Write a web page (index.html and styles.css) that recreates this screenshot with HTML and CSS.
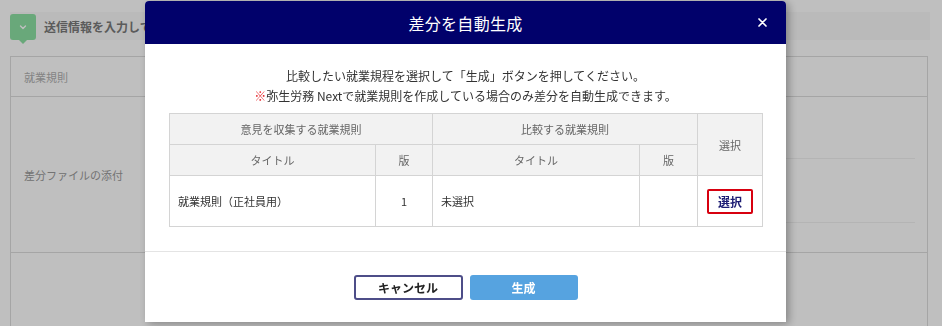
FILE: index.html
```html
<!DOCTYPE html>
<html lang="ja">
<head>
<meta charset="utf-8">
<title>差分を自動生成</title>
<link rel="stylesheet" href="styles.css">
</head>
<body>
<div class="page">
  <div class="step">
    <span class="badge">
      <svg width="10" height="10" viewBox="0 0 10 10"><path d="M2.5 4 L5 6.5 L7.5 4" fill="none" stroke="#fff" stroke-width="1.4" stroke-linecap="round" stroke-linejoin="round"/></svg>
    </span>
    <span class="step-title">送信情報を入力してください</span>
  </div>
  <div class="form">
    <div class="frow r1"><div class="flabel">就業規則</div><div class="fval"></div></div>
    <div class="frow r2"><div class="flabel">差分ファイルの添付</div>
      <div class="fval">
        <div class="fline l1"></div>
        <div class="fline l2"></div>
      </div>
    </div>
    <div class="frow r3"><div class="flabel"></div><div class="fval"></div></div>
  </div>
</div>

<div class="overlay"></div>

<div class="modal">
  <div class="modal-head">
    <span class="modal-title">差分を自動生成</span>
    <span class="modal-close" aria-label="閉じる">
      <svg width="9" height="9" viewBox="0 0 9 9"><path d="M1 1 L8 8 M8 1 L1 8" stroke="#fff" stroke-width="1.7" stroke-linecap="round"/></svg>
    </span>
  </div>
  <div class="modal-body">
    <p class="lead">比較したい就業規程を選択して「生成」ボタンを押してください。<br><span class="note">※</span>弥生労務 Nextで就業規則を作成している場合のみ差分を自動生成できます。</p>
    <table class="diff">
      <colgroup>
        <col class="c-title"><col class="c-ver"><col class="c-title2"><col class="c-ver2"><col class="c-sel">
      </colgroup>
      <tr class="h1">
        <th colspan="2">意見を収集する就業規則</th>
        <th colspan="2">比較する就業規則</th>
        <th rowspan="2">選択</th>
      </tr>
      <tr class="h2">
        <th>タイトル</th><th>版</th><th>タイトル</th><th>版</th>
      </tr>
      <tr class="d">
        <td>就業規則（正社員用）</td>
        <td class="num">1</td>
        <td>未選択</td>
        <td></td>
        <td class="sel"><span class="sel-btn">選択</span></td>
      </tr>
    </table>
  </div>
  <div class="modal-foot">
    <span class="btn btn-cancel">キャンセル</span>
    <span class="btn btn-primary">生成</span>
  </div>
</div>
</body>
</html>
```
FILE: styles.css
```css
html, body {
  margin: 0;
  padding: 0;
  background: #ffffff;
  font-family: "Noto Sans CJK JP", "Noto Sans", sans-serif;
}

.page {
  width: 942px;
  height: 326px;
  overflow: hidden;
  padding: 12px 14px 0 10px;
  box-sizing: border-box;
}

.step {
  height: 28px;
  display: flex;
  align-items: center;
  gap: 8px;
  background: #f9f9f9;
  margin-right: -2px;
}

.badge {
  position: relative;
  width: 26px;
  height: 26px;
  margin-top: 2px;
  border-radius: 3px;
  background: #8de0a3;
  display: flex;
  align-items: center;
  justify-content: center;
}

.badge::after {
  content: "";
  position: absolute;
  left: 9px;
  bottom: -4px;
  border-left: 4px solid transparent;
  border-right: 4px solid transparent;
  border-top: 4px solid #8de0a3;
}

.step-title {
  font-size: 12px;
  font-weight: bold;
  color: #7a7a7a;
}

.form {
  margin-top: 16px;
  border: 1px solid #dcdcdc;
  border-bottom: none;
}

.frow {
  display: flex;
  border-bottom: 1px solid #dcdcdc;
}

.frow.r1 { height: 39px; }
.frow.r2 { height: 155px; }
.frow.r3 { height: 80px; border-bottom: none; }

.flabel {
  width: 140px;
  padding-left: 13px;
  display: flex;
  align-items: center;
  font-size: 11px;
}

.r1 .flabel { color: #b0b0b0; }
.r2 .flabel { color: #9a9a9a; }

.fval {
  flex: 1;
  position: relative;
  padding: 0 12px 0 10px;
}

.fline {
  border-top: 1px solid #f0f0f0;
}

.fline.l1 { margin-top: 61px; }
.fline.l2 { margin-top: 63px; }

.overlay {
  position: fixed;
  inset: 0;
  background: rgba(0, 0, 0, 0.25);
}

.modal {
  position: fixed;
  left: 145px;
  top: 1px;
  width: 641px;
  height: 321px;
  background: #ffffff;
  border-radius: 4px 4px 0 0;
  box-shadow: 3px 2px 8px rgba(0, 0, 0, 0.3);
  display: flex;
  flex-direction: column;
}

.modal-head {
  position: relative;
  height: 43px;
  flex: none;
  background: #01016b;
  border-radius: 4px 4px 0 0;
  display: flex;
  align-items: center;
  justify-content: center;
}

.modal-title {
  color: #ffffff;
  font-size: 16px;
  letter-spacing: 0.3px;
}

.modal-close {
  position: absolute;
  right: 19px;
  top: 17px;
  width: 9px;
  height: 9px;
  display: flex;
}

.modal-body {
  padding: 22px 24px 24px;
  border-bottom: 1px solid #e4e4e4;
}

.lead {
  margin: 0 0 7px;
  text-align: center;
  font-size: 12px;
  line-height: 20px;
  color: #333333;
}

.note { color: #e5282e; }

.diff {
  width: 100%;
  border-collapse: collapse;
  table-layout: fixed;
  font-size: 11px;
}

.c-title { width: 206px; }
.c-ver { width: 57px; }
.c-title2 { width: 207px; }
.c-ver2 { width: 58px; }
.c-sel { width: 65px; }

.diff th, .diff td {
  border: 1px solid #d4d4d4;
  padding: 0;
}

.diff th {
  background: #f2f2f2;
  color: #666666;
  font-weight: normal;
  text-align: center;
}

.diff tr.h1 { height: 31px; }
.diff tr.h2 { height: 31px; }
.diff tr.d { height: 51px; }

.diff td {
  color: #333333;
  padding-left: 8px;
}

.diff td.num {
  text-align: center;
  padding-left: 0;
}

.diff td.sel {
  text-align: center;
  padding-left: 0;
}

.sel-btn {
  display: inline-flex;
  align-items: center;
  justify-content: center;
  box-sizing: border-box;
  width: 46px;
  height: 25px;
  border: 2.5px solid #d7000f;
  border-radius: 2px;
  color: #1c1c73;
  font-weight: bold;
  font-size: 12px;
}

.modal-foot {
  display: flex;
  justify-content: center;
  gap: 7px;
  padding-top: 23px;
}

.btn {
  box-sizing: border-box;
  height: 25px;
  display: inline-flex;
  align-items: center;
  justify-content: center;
  border-radius: 3px;
  font-size: 12px;
  font-weight: bold;
}

.btn-cancel {
  width: 109px;
  border: 2px solid #4d4d88;
  color: #222222;
  background: #ffffff;
}

.btn-primary {
  width: 108px;
  background: #56a3e0;
  color: #ffffff;
}
```
